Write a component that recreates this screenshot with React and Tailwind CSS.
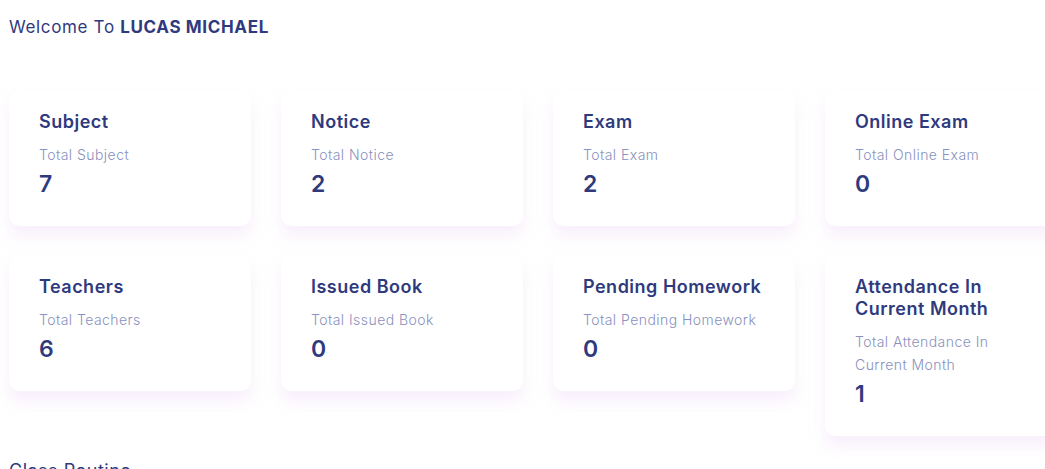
const stats = [
  { title: 'Subject', label: 'Total Subject', value: 7 },
  { title: 'Notice', label: 'Total Notice', value: 2 },
  { title: 'Exam', label: 'Total Exam', value: 2 },
  { title: 'Online Exam', label: 'Total Online Exam', value: 0 },
  { title: 'Teachers', label: 'Total Teachers', value: 6 },
  { title: 'Issued Book', label: 'Total Issued Book', value: 0 },
  { title: 'Pending Homework', label: 'Total Pending Homework', value: 0 },
  { title: 'Attendance In Current Month', label: 'Total Attendance In Current Month', value: 1 },
];

function SummaryCard({ title, label, value }) {
  return (
    <div className="self-start rounded-[10px] bg-white pl-[30px] pr-[28px] pt-[21px] pb-[28px] shadow-[0px_10px_15px_rgba(236,208,244,0.35)]">
      <h3 className="text-[18px] leading-[22px] font-semibold tracking-[0.5px] text-[#2f3a7e]">{title}</h3>
      <p className="mt-[10px] text-[14px] leading-[23px] font-light tracking-[0.45px] text-[#8991bd]">{label}</p>
      <h1 className="mt-[4px] text-[23px] leading-[28px] font-semibold text-[#2f3a7e]">{value}</h1>
    </div>
  );
}

export default function App() {
  return (
    <div
      className="h-screen w-full overflow-hidden bg-white pl-[9px] pt-[15px]"
      style={{ fontFamily: 'Inter, "Open Sans", sans-serif' }}
    >
      <h2 className="text-[17px] leading-[24px] tracking-[0.65px] text-[#2f3a7e]">
        Welcome To <span className="font-bold">LUCAS MICHAEL</span>
      </h2>

      <div className="mt-[51px] grid w-[1058px] grid-cols-[repeat(4,242px)] gap-x-[30px] gap-y-[29px]">
        {stats.map((s) => (
          <SummaryCard key={s.title} {...s} />
        ))}
      </div>

      <h2 className="mt-[23px] text-[18px] leading-[24px] tracking-[0.5px] text-[#2f3a7e]">Class Routine</h2>
    </div>
  );
}
